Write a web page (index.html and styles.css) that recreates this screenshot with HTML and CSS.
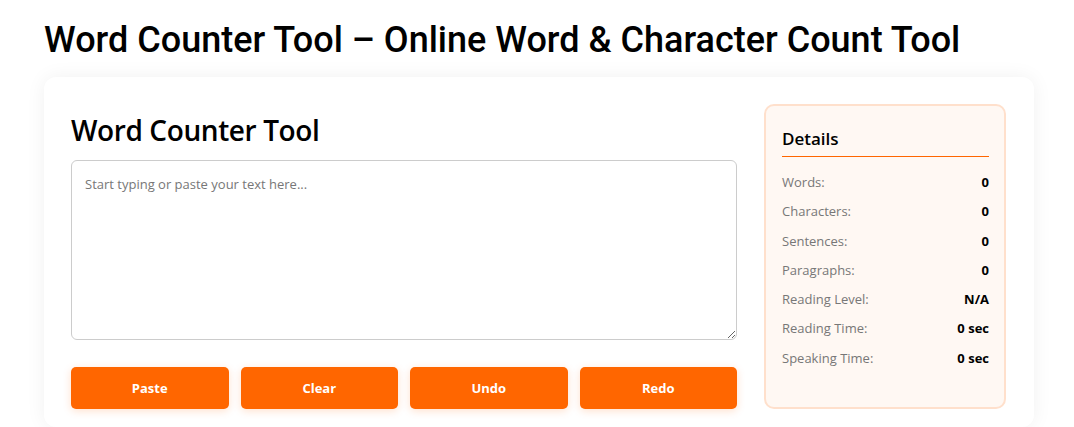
FILE: index.html
```html
<!DOCTYPE html>
<html lang="en">
<head>
<meta charset="utf-8">
<title>Word Counter Tool</title>
<link rel="stylesheet" href="styles.css">
</head>
<body>
<div class="page">
  <h1 class="page-title">Word Counter Tool – Online Word &amp; Character Count Tool</h1>
  <div class="card">
    <div class="main">
      <h2 class="tool-title">Word Counter Tool</h2>
      <textarea class="editor" placeholder="Start typing or paste your text here..."></textarea>
      <div class="actions">
        <button class="btn">Paste</button>
        <button class="btn">Clear</button>
        <button class="btn">Undo</button>
        <button class="btn">Redo</button>
      </div>
    </div>
    <aside class="details">
      <h3 class="details-title">Details</h3>
      <div class="row"><span class="label">Words:</span><span class="value">0</span></div>
      <div class="row"><span class="label">Characters:</span><span class="value">0</span></div>
      <div class="row"><span class="label">Sentences:</span><span class="value">0</span></div>
      <div class="row"><span class="label">Paragraphs:</span><span class="value">0</span></div>
      <div class="row"><span class="label">Reading Level:</span><span class="value">N/A</span></div>
      <div class="row"><span class="label">Reading Time:</span><span class="value">0 sec</span></div>
      <div class="row"><span class="label">Speaking Time:</span><span class="value">0 sec</span></div>
    </aside>
  </div>
</div>
</body>
</html>
```
FILE: styles.css
```css
* { box-sizing: border-box; }
html, body { margin: 0; padding: 0; background: #ffffff; }
body { font-family: "Open Sans", "Noto Sans", sans-serif; color: #000; }
.page { padding: 19px 40px 0 44px; }
.page-title {
  font-family: Roboto, "Liberation Sans", sans-serif;
  font-weight: 500;
  font-size: 36px;
  line-height: 42px;
  margin: 0 0 16px 0;
  color: #000;
}
.card {
  width: 990px;
  background: #fff;
  border-radius: 12px;
  box-shadow: 0 0 20px rgba(0,0,0,0.06);
  padding: 27px 28px 18px 27px;
  display: flex;
  gap: 27px;
  align-items: stretch;
}
.main { width: 666px; display: flex; flex-direction: column; }
.tool-title {
  font-size: 28px;
  font-weight: 600;
  line-height: 36px;
  margin: 8px 0 12px 0;
  letter-spacing: -0.4px;
}
.editor {
  width: 666px;
  height: 180px;
  border: 1px solid #cccccc;
  border-radius: 6px;
  padding: 14px 13px;
  font-family: "Open Sans", "Noto Sans", sans-serif;
  font-size: 13px;
  resize: vertical;
  color: #333;
  outline: none;
}
.editor::placeholder { color: #777; }
.actions {
  display: grid;
  grid-template-columns: repeat(4, 1fr);
  gap: 12px;
  margin-top: 27px;
}
.btn {
  height: 42px;
  border: none;
  border-radius: 5px;
  background: #ff6600;
  color: #fff;
  font-family: "Open Sans", "Noto Sans", sans-serif;
  font-weight: 700;
  font-size: 13px;
  box-shadow: 0 2px 8px rgba(255,102,0,0.2);
}
.details {
  width: 242px;
  background: #fff8f3;
  border: 2px solid #ffe0cc;
  border-radius: 10px;
  padding: 21px 15px 16px 16px;
}
.details-title {
  font-size: 17px;
  font-weight: 600;
  line-height: 24px;
  margin: 0 0 11px 0;
  padding-bottom: 5px;
  border-bottom: 1px solid #ff6600;
}
.row {
  display: flex;
  justify-content: space-between;
  font-size: 13px;
  line-height: 17.3px;
  padding: 6px 0;
}
.label { color: #777; }
.value { font-weight: 700; color: #000; }
```
